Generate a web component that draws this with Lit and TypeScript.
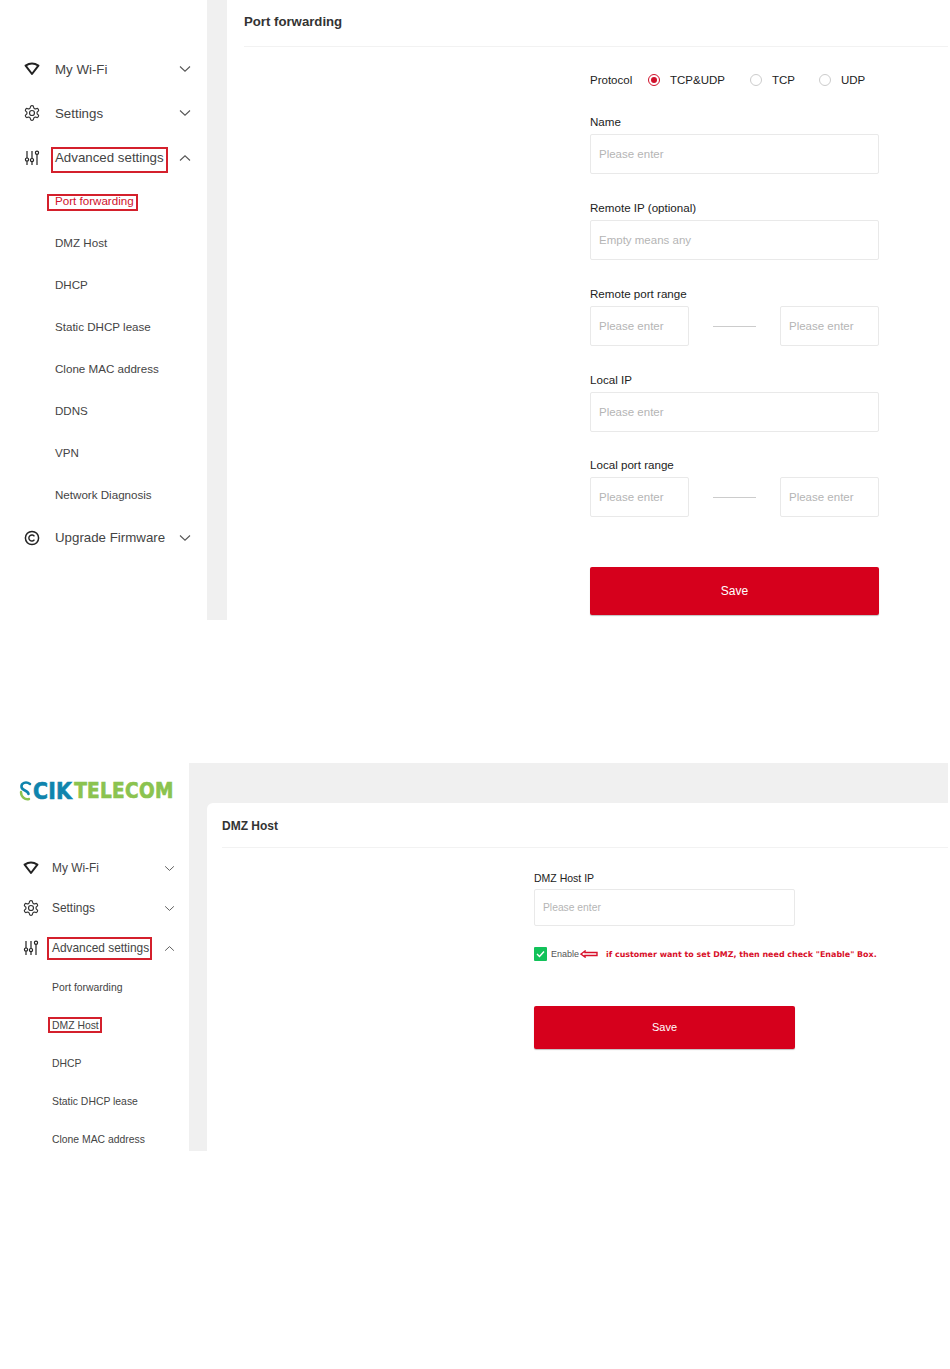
import { LitElement, html, css, svg } from "lit";
import { customElement } from "lit/decorators.js";

const chevDown = html`<svg class="chev" viewBox="0 0 12 8" fill="none" stroke="#555" stroke-width="1.05"><path d="M1 1.5 L6 6.2 L11 1.5"/></svg>`;
const chevUp = html`<svg class="chev" viewBox="0 0 12 8" fill="none" stroke="#555" stroke-width="1.05"><path d="M1 6.5 L6 1.8 L11 6.5"/></svg>`;
const icons: Record<string, unknown> = {
  wifi: svg`<path d="M1.6 4.6 Q8 0.6 14.4 4.6 L8 13 Z" fill="none" stroke="#222" stroke-width="2" stroke-linejoin="round"/>`,
  gear: svg`<g transform="translate(-.8 -.8) scale(.733)" fill="none" stroke="#333" stroke-width="1.6"><path d="M12.22 2h-.44a2 2 0 0 0-2 2v.18a2 2 0 0 1-1 1.73l-.43.25a2 2 0 0 1-2 0l-.15-.08a2 2 0 0 0-2.73.73l-.22.38a2 2 0 0 0 .73 2.73l.15.1a2 2 0 0 1 1 1.72v.51a2 2 0 0 1-1 1.74l-.15.09a2 2 0 0 0-.73 2.73l.22.38a2 2 0 0 0 2.73.73l.15-.08a2 2 0 0 1 2 0l.43.25a2 2 0 0 1 1 1.73V20a2 2 0 0 0 2 2h.44a2 2 0 0 0 2-2v-.18a2 2 0 0 1 1-1.73l.43-.25a2 2 0 0 1 2 0l.15.08a2 2 0 0 0 2.73-.73l.22-.39a2 2 0 0 0-.73-2.73l-.15-.08a2 2 0 0 1-1-1.74v-.5a2 2 0 0 1 1-1.74l.15-.09a2 2 0 0 0 .73-2.73l-.22-.38a2 2 0 0 0-2.73-.73l-.15.08a2 2 0 0 1-2 0l-.43-.25a2 2 0 0 1-1-1.73V4a2 2 0 0 0-2-2z"/><circle cx="12" cy="12" r="3.4"/></g>`,
  sliders: svg`<g fill="none" stroke="#222" stroke-width="1.2"><path d="M3 1V8M3 11.2V15M8 1V8.5M8 11.7V15M13 4.5V15"/><circle cx="3" cy="9.6" r="1.6"/><circle cx="8" cy="10.1" r="1.6"/><circle cx="13" cy="2.8" r="1.6"/></g>`,
  up: svg`<circle cx="8" cy="8" r="6.6" fill="none" stroke="#222" stroke-width="1.5"/><path d="M10.4 6.4 A3 3 0 1 0 10.4 9.6" fill="none" stroke="#222" stroke-width="1.4"/>`,
};

type Item = { label: string; icon?: string; open?: boolean; mark?: boolean; active?: boolean };
const top: Item[] = [
  { label: "My Wi-Fi", icon: "wifi" },
  { label: "Settings", icon: "gear" },
  { label: "Advanced settings", icon: "sliders", open: true, mark: true },
  { label: "Port forwarding", mark: true, active: true },
  { label: "DMZ Host" },
  { label: "DHCP" },
  { label: "Static DHCP lease" },
  { label: "Clone MAC address" },
  { label: "DDNS" },
  { label: "VPN" },
  { label: "Network Diagnosis" },
  { label: "Upgrade Firmware", icon: "up" },
];
const bottom: Item[] = [
  { label: "My Wi-Fi", icon: "wifi" },
  { label: "Settings", icon: "gear" },
  { label: "Advanced settings", icon: "sliders", open: true, mark: true },
  { label: "Port forwarding" },
  { label: "DMZ Host", mark: true },
  { label: "DHCP" },
  { label: "Static DHCP lease" },
  { label: "Clone MAC address" },
];

@customElement("app-root")
export class AppRoot extends LitElement {
  static styles = css`
    :host { display: block; width: 950px; min-height: 1369px; background: #fff; font-family: "Liberation Sans", Arial, sans-serif; color: #333; }
    * { box-sizing: border-box; }
    .panel { display: flex; width: 948px; overflow: hidden; }
    .p1 { height: 620px; margin-bottom: 143px; }
    .p2 { height: 388px; }

    .side { flex: none; }
    .p1 .side { width: 207px; padding-top: 47px; }
    .p2 .side { width: 189px; }
    .item { display: flex; align-items: center; color: #444; }
    .p1 .item { height: 44.25px; padding: 0 16px 0 24px; font-size: 13.3px; }
    .p2 .item { height: 40px; padding: 0 14px 0 23px; font-size: 11.9px; }
    .item svg.ic { width: 16px; height: 16px; flex: none; }
    .p1 .item .t { margin-left: 15px; }
    .p2 .item .t { margin-left: 13px; }
    .chev { width: 12px; height: 8px; margin-left: auto; flex: none; }
    .p2 .chev { width: 11px; height: 7px; }
    .sub { display: flex; align-items: center; color: #444; }
    .p1 .sub { height: 42px; padding-left: 55px; font-size: 11.6px; }
    .p2 .sub { height: 38px; padding-left: 52px; font-size: 10.4px; }
    .mark { position: relative; }
    .mark::after { content: ""; position: absolute; border: 2px solid #d4202c; }
    .p1 .item .mark::after { top: -3px; bottom: -8px; left: -4px; right: -4px; }
    .p1 .sub .mark::after { top: 0; bottom: -4px; left: -8px; right: -4px; }
    .p2 .item .mark::after { top: -4px; bottom: -5px; left: -5px; right: -3px; }
    .p2 .sub .mark::after { top: -3px; bottom: -2px; left: -4px; right: -3px; }
    .active { color: #d0112b; }

    .logo { height: 85px; padding: 17px 0 0 18px; display: flex; align-items: flex-start; }
    .logo svg { width: 15px; height: 22px; flex: none; }
    .brand { display: flex; font-size: 20.5px; line-height: 22px; font-weight: 700; font-family: "DejaVu Sans", sans-serif; white-space: nowrap; -webkit-text-stroke: 0.6px currentColor; }
    .cik { color: #0f84ad; letter-spacing: 0.2px; transform: scaleY(1.08); }
    .tel { color: #8bc34f; font-size: 18.5px; letter-spacing: 0.3px; margin-left: 2px; transform: scaleY(1.18); }

    .gutter { flex: none; background: #f0f0f0; }
    .p1 .gutter { width: 20px; }
    .main { flex: 1; min-width: 0; background: #fff; }
    .p1 .main { padding-left: 17px; }
    .head { font-weight: 700; color: #333; border-bottom: 1px solid #f2f2f2; display: flex; align-items: center; }
    .p1 .head { height: 47px; font-size: 13.2px; padding-bottom: 4px; }

    .right { flex: 1; min-width: 0; display: flex; flex-direction: column; background: #f0f0f0; }
    .band { height: 40px; flex: none; }
    .cardwrap { flex: 1; padding-left: 18px; display: flex; min-height: 0; }
    .card { flex: 1; background: #fff; border-top-left-radius: 6px; padding-left: 15px; }
    .p2 .head { height: 45px; font-size: 12px; padding-top: 1px; }

    .form { width: 289px; margin-left: 346px; font-size: 11.6px; color: #222; }
    .proto { display: flex; align-items: center; height: 20px; margin-top: 23px; margin-bottom: 22px; font-size: 11.5px; }
    .proto .lbl { width: 58px; }
    .radio { width: 12px; height: 12px; border-radius: 50%; border: 1px solid #ccc; flex: none; margin-right: 10px; background: #fff; }
    .radio.on { border-color: #d0112b; display: flex; align-items: center; justify-content: center; }
    .radio.on::after { content: ""; width: 6px; height: 6px; border-radius: 50%; background: #d0112b; }
    .opt { display: flex; align-items: center; font-size: 11.5px; }
    .o1 { width: 102px; }
    .o2 { width: 69px; }
    .field { margin-bottom: 24px; }
    .field.tight { margin-top: -1px; }
    .field .lbl { height: 20px; line-height: 20px; margin-bottom: 2px; }
    .in { display: flex; align-items: center; height: 40px; border: 1px solid #e9e9e9; border-radius: 2px; padding-left: 8px; color: #b5b5b5; font-size: 11.5px; background: #fff; }
    .range { display: grid; grid-template-columns: 99px 1fr 99px; align-items: center; }
    .dash { height: 1px; background: #ccc; margin: 0 24px; }
    .btn { display: flex; align-items: center; justify-content: center; background: #d6001c; color: #fff; border-radius: 2px; font-size: 12px; border: none; width: 100%; }
    .form .btn { height: 48px; margin-top: 50px; box-shadow: 0 1px 1px rgba(0,0,0,.25); }

    .form2 { width: 261px; margin-left: 312px; font-size: 10.5px; color: #222; }
    .form2 .lbl { height: 20px; line-height: 20px; margin-top: 20px; margin-bottom: 1px; }
    .form2 .in { height: 37px; font-size: 10.3px; }
    .en { display: flex; align-items: center; height: 14px; margin-top: 21px; white-space: nowrap; font-size: 9px; color: #555; }
    .check { width: 13px; height: 14px; border-radius: 1px; background: #12c25a; flex: none; margin-right: 4px; display: flex; align-items: center; justify-content: center; }
    .check svg { width: 9px; height: 8px; }
    .arrow { width: 18px; height: 8px; flex: none; margin: 0 8px 0 1px; }
    .note { color: #d8102a; font-family: "DejaVu Sans", sans-serif; font-weight: 700; font-size: 7.95px; }
    .form2 .btn { height: 43px; margin-top: 45px; padding-bottom: 2px; font-size: 11px; box-shadow: 0 1px 1px rgba(0,0,0,.25); }
  `;

  private nav(items: Item[]) {
    return items.map((it) =>
      it.icon
        ? html`<div class="item">
            <svg class="ic" viewBox="0 0 16 16">${icons[it.icon]}</svg>
            <span class="t ${it.mark ? "mark" : ""}">${it.label}</span>
            ${it.open ? chevUp : chevDown}
          </div>`
        : html`<div class="sub"><span class="${it.mark ? "mark" : ""} ${it.active ? "active" : ""}">${it.label}</span></div>`
    );
  }

  private input(ph: string) {
    return html`<div class="in">${ph}</div>`;
  }

  private range(label: string, tight = false) {
    return html`<div class="field ${tight ? "tight" : ""}"><div class="lbl">${label}</div>
      <div class="range">${this.input("Please enter")}<div class="dash"></div>${this.input("Please enter")}</div></div>`;
  }

  private single(label: string, ph: string) {
    return html`<div class="field"><div class="lbl">${label}</div>${this.input(ph)}</div>`;
  }

  render() {
    return html`
      <section class="panel p1">
        <nav class="side">${this.nav(top)}</nav>
        <div class="gutter"></div>
        <div class="main">
          <div class="head">Port forwarding</div>
          <div class="form">
            <div class="proto">
              <span class="lbl">Protocol</span>
              <span class="opt o1"><span class="radio on"></span>TCP&amp;UDP</span>
              <span class="opt o2"><span class="radio"></span>TCP</span>
              <span class="opt"><span class="radio"></span>UDP</span>
            </div>
            ${this.single("Name", "Please enter")}
            ${this.single("Remote IP (optional)", "Empty means any")}
            ${this.range("Remote port range")}
            ${this.single("Local IP", "Please enter")}
            ${this.range("Local port range", true)}
            <div class="btn">Save</div>
          </div>
        </div>
      </section>

      <section class="panel p2">
        <nav class="side">
          <div class="logo">
            <svg viewBox="0 0 15 22" fill="none" stroke-linecap="round">
              <path d="M12 4 C8 1 3 3 3.5 7 C4 11 10 10 10.5 14" stroke="#0f84ad" stroke-width="2.6"/>
              <path d="M3 12 C3 17 7 20 11 19" stroke="#8bc34f" stroke-width="2.4"/>
            </svg>
            <span class="brand"><span class="cik">CIK</span><span class="tel">TELECOM</span></span>
          </div>
          ${this.nav(bottom)}
        </nav>
        <div class="right">
          <div class="band"></div>
          <div class="cardwrap">
            <div class="card">
              <div class="head">DMZ Host</div>
              <div class="form2">
                <div class="lbl">DMZ Host IP</div>
                ${this.input("Please enter")}
                <div class="en">
                  <span class="check"><svg viewBox="0 0 9 8" fill="none" stroke="#fff" stroke-width="1.4"><path d="M1 4 L3.5 6.5 L8 1.5"/></svg></span>
                  Enable
                  <svg class="arrow" viewBox="0 0 18 8" fill="none" stroke="#d8102a" stroke-width="1.4"><path d="M5 1 L1 4 L5 7 V5.5 H17 V2.5 H5 Z"/></svg>
                  <span class="note">if customer want to set DMZ, then need check "Enable" Box.</span>
                </div>
                <div class="btn">Save</div>
              </div>
            </div>
          </div>
        </div>
      </section>
    `;
  }
}
